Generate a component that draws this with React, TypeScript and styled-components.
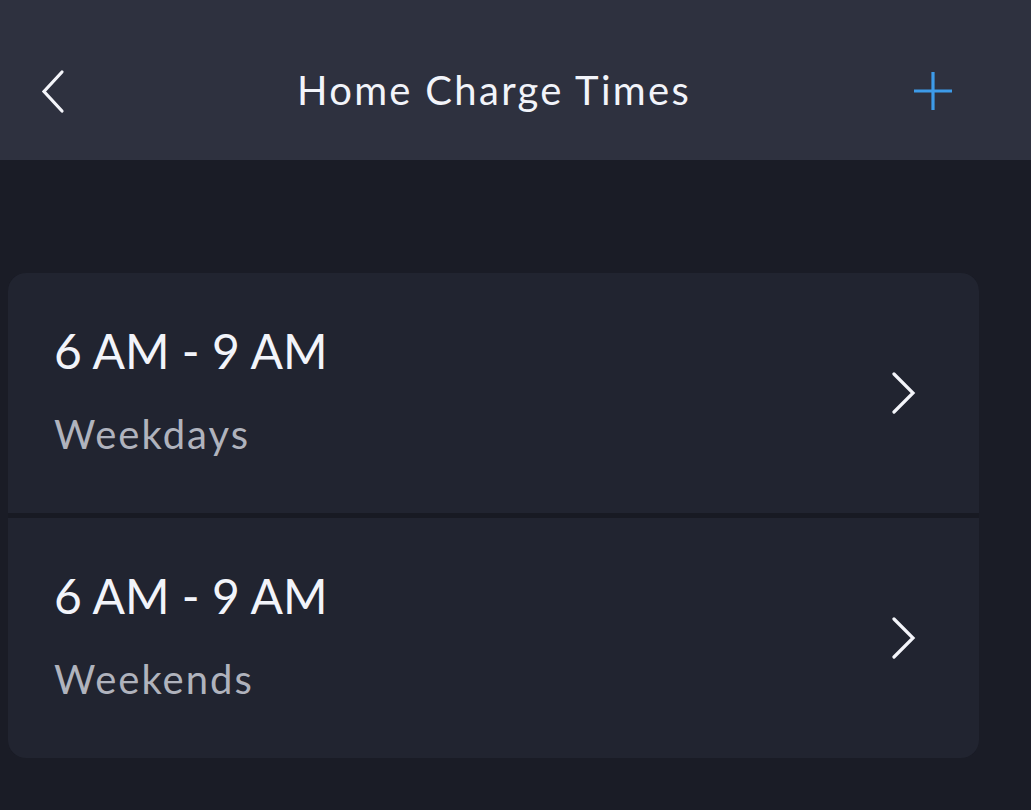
import styled, { createGlobalStyle } from 'styled-components';

const GlobalStyle = createGlobalStyle`
  html, body {
    margin: 0;
    padding: 0;
    background-color: #1a1c26;
  }
  body {
    font-family: Lato, 'Open Sans', sans-serif;
    color: #f2f4fa;
  }
`;

interface ISchedule {
  id: number;
  time: string;
  days: string;
}

const SCHEDULES: ISchedule[] = [
  { id: 1, time: '6 AM - 9 AM', days: 'Weekdays' },
  { id: 2, time: '6 AM - 9 AM', days: 'Weekends' },
];

const App = () => {
  return (
    <>
      <GlobalStyle />
      <Page>
        <Header>
          <IconBtn aria-label="back">
            <svg width="40" height="50" viewBox="0 0 40 50">
              <path d="M22 7 L4 26.5 L22 46" fill="none" stroke="#f4f5fa" strokeWidth="3.2" strokeLinecap="round" strokeLinejoin="miter" />
            </svg>
          </IconBtn>
          <Title>Home Charge Times</Title>
          <IconBtn aria-label="add">
            <svg width="40" height="40" viewBox="0 0 40 40">
              <path d="M20 2 V40 M1 21 H39" fill="none" stroke="#3d9be9" strokeWidth="3.2" />
            </svg>
          </IconBtn>
        </Header>
        <List>
          {SCHEDULES.map((item) => (
            <Row key={item.id}>
              <Texts>
                <Time>{item.time}</Time>
                <Days>{item.days}</Days>
              </Texts>
              <svg width="26" height="42" viewBox="0 0 26 42">
                <path d="M3 2 L22 21 L3 40" fill="none" stroke="#f4f5fa" strokeWidth="3.2" strokeLinecap="round" />
              </svg>
            </Row>
          ))}
        </List>
      </Page>
    </>
  );
};

export default App;

const Page = styled.div`
  width: 1031px;
  height: 810px;
  background-color: #1a1c26;
  overflow: hidden;
`;

const Header = styled.div`
  height: 160px;
  background-color: #2e313f;
  display: flex;
  align-items: center;
  justify-content: space-between;
  padding: 20px 78px 0 40px;
  box-sizing: border-box;
`;

const IconBtn = styled.button`
  background: none;
  border: none;
  padding: 0;
  display: flex;
  align-items: center;
  justify-content: center;
  cursor: pointer;
`;

const Title = styled.h1`
  margin: 0 5px 0 0;
  font-size: 40px;
  line-height: 48px;
  font-weight: 400;
  letter-spacing: 2.3px;
  color: #f2f4fa;
`;

const List = styled.div`
  margin: 113px 52px 0 8px;
  border-radius: 18px;
  overflow: hidden;
  display: flex;
  flex-direction: column;
  gap: 5px;
  background-color: #181a23;
`;

const Row = styled.div`
  height: 240px;
  background-color: #212430;
  display: flex;
  align-items: center;
  justify-content: space-between;
  padding: 0 62px 0 46px;
  box-sizing: border-box;
`;

const Texts = styled.div`
  display: flex;
  flex-direction: column;
  gap: 31px;
  margin-top: -6px;
`;

const Time = styled.div`
  font-size: 48px;
  line-height: 56px;
  color: #f2f4fa;
`;

const Days = styled.div`
  font-size: 40px;
  line-height: 48px;
  letter-spacing: 2px;
  color: #b0b3bd;
`;
